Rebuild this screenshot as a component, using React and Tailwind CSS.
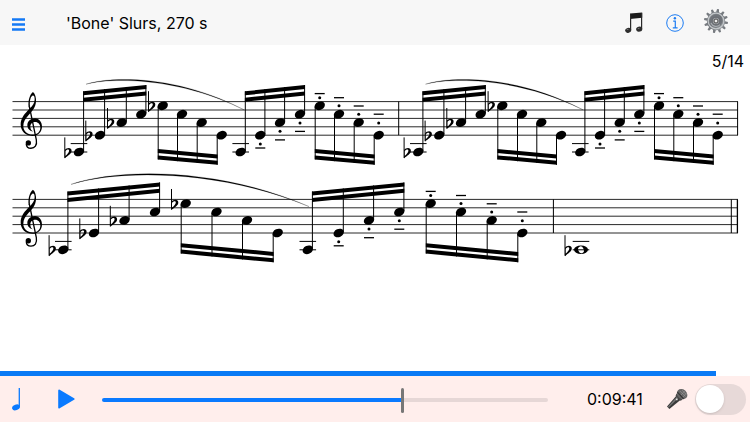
import { useState } from 'react';

// Distance between two staff lines
const GAP = 8.4;

// Staff positions counted in gaps down from the top line
const AB3 = 6;
const EB4 = 4;
const AB4 = 2.5;
const C5 = 1.5;
const EB5 = 0.5;

const RISING = [AB3, EB4, AB4, C5];
const FALLING = [EB5, C5, AB4, EB4];

const systems = [
  {
    top: 101.6,
    bars: [{ x: 398.7, w: 1 }, { x: 737.6, w: 1 }],
    slurs: [
      'M86 -17.4C112 -25.8 178 -26.4 244 8.2C178 -24.6 112 -24.2 86 -17.4Z',
      'M425.5 -17.4C451.5 -25.8 517 -26.4 583 8.2C517 -24.6 451.5 -24.2 425.5 -17.4Z',
    ],
    up: [-10.3, -16.6],
    down: [57.8, 63.2],
    groups: [
      { xs: [79, 100, 121.7, 141.3], flats: [0, 1, 2] },
      { xs: [162.7, 182, 201.7, 221.7], flats: [0], falling: true },
      { xs: [240.7, 260.3, 280, 300], accents: true },
      { xs: [319.7, 339, 358.7, 378.7], falling: true, accents: true },
      { xs: [418.3, 439.3, 461, 480.7], flats: [0, 1, 2] },
      { xs: [502.3, 522, 541.3, 561], flats: [0], falling: true },
      { xs: [580.3, 600, 619.7, 639.3], accents: true },
      { xs: [659, 678.3, 698, 717.7], falling: true, accents: true },
    ],
  },
  {
    top: 199.4,
    bars: [{ x: 553.4, w: 1 }, { x: 731.3, w: 1 }, { x: 737.4, w: 1.3 }],
    slurs: ['M71 -15C118 -31.4 218 -32.4 309 7.2C218 -30.6 118 -29.8 71 -15Z'],
    up: [-7.9, -17],
    down: [54.2, 62.9],
    whole: 581,
    groups: [
      { xs: [63.3, 94, 124.5, 155], flats: [0, 1, 2] },
      { xs: [185.7, 216.5, 247, 277.7], flats: [0], falling: true },
      { xs: [307.8, 338.7, 369, 399.3], accents: true },
      { xs: [430.7, 461, 491.7, 522.3], falling: true, accents: true },
    ],
  },
];

// Offsets of the staccato dot and the tenuto line from the note head
const accentOffsets = {
  up: { [EB4]: [8.7, 12.8], [AB4]: [8.7, 17.3], [C5]: [8.7, 17.2] },
  down: { [EB5]: [-8.1, -12.2], [C5]: [-8.4, -16.5], [AB4]: [-8.4, -16.6], [EB4]: [-12.3, -21] },
};

function TrebleClef() {
  return (
    <g transform="scale(0.3333) translate(0 -95)">
      <path d="M86 112C83 92 90 72 99 66C106 72 109 84 108 95C107 112 97 124 86 135C76 146 70 155 70 168C70 184 82 194 98 194C112 194 121 186 121 173C121 163 114 156 106 156C97 156 91 162 91 170C91 178 94 183 100 185C90 184 82 176 82 166C82 154 92 145 105 145C117 145 126 156 126 170C126 187 114 198 97 198C77 198 62 184 62 164C62 146 72 134 82 123L89 116C98 108 104 99 104 88C104 80 102 77 99 77C93 78 88 90 90 110Z" />
      <path d="M88 109L109 210C112 227 104 235 93 235C85 235 79 230 79 222" fill="none" stroke="#000" strokeWidth="4" />
      <circle cx="85" cy="219" r="8" />
    </g>
  );
}

function Flat({ x, y }) {
  return (
    <g transform={`translate(${x} ${y})`}>
      <path d="M0 -14.6V6" stroke="#000" strokeWidth="1" />
      <path fillRule="evenodd" d="M0 -2C2 -4.6 6.8 -4.8 6.8 -1.2C6.8 2 3 3.6 0 6.4ZM0.5 -0.8V4C2.6 2.2 4.3 0.6 4.3 -1.2C4.3 -3 2 -2.8 0.5 -0.8Z" />
    </g>
  );
}

function Ledgers({ x }) {
  return <path d={`M${x - 8.3} ${5 * GAP}h16.6M${x - 8.3} ${6 * GAP}h16.6`} stroke="#000" strokeWidth="1" />;
}

function Group({ xs, flats = [], falling, accents, beam }) {
  const pitches = falling ? FALLING : RISING;
  const side = falling ? -4.5 : 4.6;
  const x0 = xs[0] + side;
  const x1 = xs[3] + side;
  const [y0, y1] = beam;
  const dir = falling ? -1 : 1;
  const beamY = (x) => y0 + ((x - x0) / (x1 - x0)) * (y1 - y0);
  const bar = (off) =>
    `M${x0 - 0.4} ${y0 + off * dir}L${x1 + 0.4} ${y1 + off * dir}V${y1 + (off + 4) * dir}L${x0 - 0.4} ${y0 + (off + 4) * dir}Z`;

  return (
    <g>
      <path d={bar(0)} />
      <path d={bar(6.4)} />
      {xs.map((x, i) => {
        const y = pitches[i] * GAP;
        const offsets = accents && accentOffsets[falling ? 'down' : 'up'][pitches[i]];
        return (
          <g key={i}>
            {pitches[i] === AB3 && <Ledgers x={x} />}
            {flats.includes(i) && <Flat x={x - 14.2} y={y} />}
            <ellipse cx={x} cy={y} rx="5.4" ry="4.1" transform={`rotate(-24 ${x} ${y})`} />
            <path d={`M${x + side} ${y - dir}V${beamY(x + side)}`} stroke="#000" strokeWidth="1" />
            {offsets && (
              <>
                <circle cx={x} cy={y + offsets[0]} r="1.5" />
                <path d={`M${x - 5} ${y + offsets[1]}h10`} stroke="#000" strokeWidth="1.3" />
              </>
            )}
          </g>
        );
      })}
    </g>
  );
}

function Score() {
  return (
    <svg viewBox="0 75 750 200" className="block w-full" role="img" aria-label="Sheet music">
      {systems.map((s) => (
        <g key={s.top} transform={`translate(0 ${s.top})`}>
          {[0, 1, 2, 3, 4].map((n) => (
            <path key={n} d={`M12.5 ${n * GAP}H738`} stroke="#111" strokeWidth="0.9" />
          ))}
          {s.bars.map((b) => (
            <path key={b.x} d={`M${b.x} 0V${4 * GAP}`} stroke="#000" strokeWidth={b.w} />
          ))}
          <TrebleClef />
          {s.slurs.map((d) => (
            <path key={d} d={d} stroke="#000" strokeWidth="0.2" />
          ))}
          {s.groups.map((g, i) => (
            <Group key={i} {...g} beam={g.falling ? s.down : s.up} />
          ))}
          {s.whole && (
            <g>
              <Flat x={s.whole - 16} y={AB3 * GAP} />
              <ellipse cx={s.whole} cy={AB3 * GAP} rx="7" ry="4.2" />
              <ellipse cx={s.whole} cy={AB3 * GAP} rx="2.7" ry="3.5" fill="#fff" transform={`rotate(-25 ${s.whole} ${AB3 * GAP})`} />
              <Ledgers x={s.whole} />
            </g>
          )}
        </g>
      ))}
    </svg>
  );
}

function NotesIcon() {
  return (
    <svg viewBox="0 0 18 22" className="h-[22px] w-[18px]" aria-hidden="true">
      <path d="M5 1.6L17.2 0.4V5.8L5 7Z" fill="#1c1c1c" />
      <path d="M5.6 2V18M16.6 1V17" stroke="#2a2a2a" strokeWidth="1.2" />
      <ellipse cx="3.2" cy="18.3" rx="3.1" ry="2.5" fill="#2e2e2e" transform="rotate(-15 3.2 18.3)" />
      <ellipse cx="14.2" cy="17.2" rx="3.1" ry="2.5" fill="#2e2e2e" transform="rotate(-15 14.2 17.2)" />
      <ellipse cx="2.6" cy="17.6" rx="1" ry="0.5" fill="#777" />
      <ellipse cx="13.6" cy="16.5" rx="1" ry="0.5" fill="#777" />
    </svg>
  );
}

function InfoIcon() {
  return (
    <svg viewBox="0 0 18 18" className="size-[18px]" fill="none" stroke="#1d7cf2" aria-hidden="true">
      <circle cx="9" cy="9" r="8.3" strokeWidth="1" />
      <circle cx="8.9" cy="4.3" r="1.2" fill="#1d7cf2" stroke="none" />
      <path d="M7.2 7.2H9.3V13.8M6.8 13.9H11.6" strokeWidth="1.2" />
    </svg>
  );
}

function GearIcon() {
  return (
    <svg viewBox="-12 -12 24 24" className="size-6" aria-hidden="true">
      <defs>
        <linearGradient id="steel" x1="0" y1="0" x2="1" y2="1">
          <stop offset="0" stopColor="#8b8f94" />
          <stop offset="0.5" stopColor="#6f7378" />
          <stop offset="1" stopColor="#a9adb1" />
        </linearGradient>
      </defs>
      {Array.from({ length: 12 }, (_, i) => (
        <path key={i} d="M-1.5 -8L-1 -12H1L1.5 -8Z" fill="#777b80" transform={`rotate(${i * 30 + 10})`} />
      ))}
      <circle r="9.2" fill="url(#steel)" />
      <circle r="7.8" fill="none" stroke="#c3c7ca" strokeWidth="1.2" />
      <circle r="6.2" fill="#70747a" />
      <path d="M-5 2A5.4 5.4 0 0 0 4 3.6" fill="none" stroke="#a9adb1" strokeWidth="1.2" />
      <circle r="3.8" fill="#a5a9ad" stroke="#54585d" strokeWidth="0.7" />
      <circle r="2" fill="#eee" stroke="#4b4b4b" strokeWidth="1" />
    </svg>
  );
}

function MicIcon() {
  return (
    <svg viewBox="0 0 22 22" className="size-[22px]" aria-hidden="true">
      <path d="M10.8 7.2L15 11.4L3.4 21L1 18.6Z" fill="#3a3a3a" />
      <path d="M11.4 8.2L12.8 9.6L2.6 19.4L2 18.8Z" fill="#777" />
      <path d="M10.4 5.6L16.6 11.8L14.4 12.8L9.6 8Z" fill="#4a4a4a" />
      <ellipse cx="16.1" cy="6.2" rx="5.6" ry="4.7" fill="#666" transform="rotate(40 16.1 6.2)" />
      <path d="M11.4 4.2L17.6 10.8" stroke="#333" strokeWidth="1.2" />
      <path d="M14 3L19.6 8.4M16 2L20.4 6.6M15 7L19 2.8M17 9L20.6 5" stroke="#999" strokeWidth="0.6" />
      <circle cx="10.8" cy="11.4" r="0.9" fill="#e5e5e5" />
    </svg>
  );
}

export default function App() {
  const [position, setPosition] = useState(675);
  const [micOn, setMicOn] = useState(false);
  const percent = position / 10;

  return (
    <div className="flex min-h-screen flex-col bg-white font-[Inter,sans-serif] text-base leading-5 text-black">
      <header className="flex h-[45px] items-center bg-[#f7f7f7] pr-[22px] pl-3">
        <button type="button" aria-label="Menu" className="mt-1 w-[13px]">
          <svg viewBox="0 0 13 13" className="block size-[13px]" aria-hidden="true">
            <path d="M0 1.5H13M0 6.5H13M0 11.5H13" stroke="#1479f5" strokeWidth="2.4" />
          </svg>
        </button>
        <h1 className="ml-[41px] flex-1">'Bone' Slurs, 270 s</h1>
        <div className="flex items-center">
          <button type="button" aria-label="Sounds"><NotesIcon /></button>
          <button type="button" aria-label="Info" className="ml-[23px]"><InfoIcon /></button>
          <button type="button" aria-label="Settings" className="mb-1 ml-5"><GearIcon /></button>
        </div>
      </header>

      <main className="flex-1">
        <p className="h-[30px] pt-[6px] pr-[6px] text-right">5/14</p>
        <Score />
      </main>

      {/* Session progress */}
      <div className="h-[5px]">
        <div className="h-full bg-[#0a7af5]" style={{ width: '95.5%' }} />
      </div>

      <footer className="flex h-[46px] items-center bg-[#ffeeec] pr-1 pl-3">
        <button type="button" aria-label="Tempo">
          <svg viewBox="0 0 8 24" className="block h-6 w-2" aria-hidden="true">
            <path d="M7.3 1V20.5" stroke="#0a7aff" strokeWidth="1.3" />
            <ellipse cx="4" cy="20.4" rx="4" ry="2.8" fill="#0a7aff" transform="rotate(-18 4 20.4)" />
          </svg>
        </button>
        <button type="button" aria-label="Play" className="ml-[38px]">
          <svg viewBox="0 0 17 20" className="block h-5 w-[17px]" aria-hidden="true">
            <path d="M1.2 1.5L15.6 10L1.2 18.5Z" fill="#0a7aff" stroke="#0a7aff" strokeWidth="2" strokeLinejoin="round" />
          </svg>
        </button>
        <input
          type="range"
          min="0"
          max="1000"
          value={position}
          onChange={(e) => setPosition(Number(e.target.value))}
          aria-label="Playback position"
          className="mt-[2px] ml-[27px] h-1 min-w-0 flex-1 appearance-none rounded-full [&::-webkit-slider-thumb]:h-[25px] [&::-webkit-slider-thumb]:w-[3px] [&::-webkit-slider-thumb]:appearance-none [&::-webkit-slider-thumb]:rounded-full [&::-webkit-slider-thumb]:bg-[#777]"
          style={{ background: `linear-gradient(to right, #0a7aff ${percent}%, #e6d7d6 ${percent}%)` }}
        />
        <time className="ml-[39px] w-[59px]">0:09:41</time>
        <div className="ml-5 flex items-center gap-[7px]">
          <label htmlFor="mic" aria-label="Microphone"><MicIcon /></label>
          <input
            id="mic"
            type="checkbox"
            role="switch"
            checked={micOn}
            onChange={(e) => setMicOn(e.target.checked)}
            className="flex h-[31px] w-[51px] appearance-none items-center rounded-full bg-[#e7d9d8] px-[1px] before:size-7 before:rounded-full before:bg-white before:shadow checked:justify-end checked:bg-[#34c759]"
          />
        </div>
      </footer>
    </div>
  );
}
